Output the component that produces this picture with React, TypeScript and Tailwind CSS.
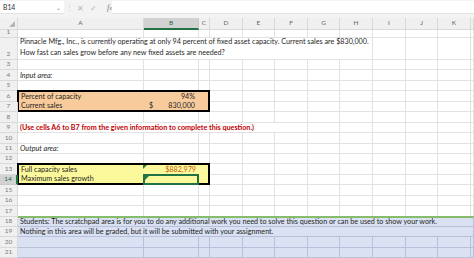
import type { ReactNode } from "react";

const HEADERS = ["A", "B", "C", "D", "E", "F", "G", "H", "I", "J", "K", ""];

const SPAN: Record<number, string> = {
  1: "col-span-1",
  2: "col-span-2",
  3: "col-span-3",
  4: "col-span-4",
  5: "col-span-5",
  6: "col-span-6",
  7: "col-span-7",
  8: "col-span-8",
  9: "col-span-9",
  10: "col-span-10",
  11: "col-span-11",
  12: "col-span-12",
};

const GRID = "border-r border-b border-[#e2e2e2]";
const BLUE = "bg-[#d9e1f2] border-r border-b border-[#b7c2da]";

function RowHead({ n, active }: { n: number | string; active?: boolean }) {
  return (
    <div
      className={`flex items-end justify-center pb-[1.5px] text-[6.5px] leading-none border-b border-r ${
        active
          ? "bg-[#d2d2d2] text-[#1e6b41] border-r-[#217346] border-r-2 border-b-[#c8c8c8]"
          : "bg-[#f0f0f0] text-[#7a7a7a] border-[#dadada]"
      }`}
    >
      {n}
    </div>
  );
}

function Empty({ count, cls = GRID }: { count: number; cls?: string }) {
  return (
    <>
      {Array.from({ length: count }).map((_, i) => (
        <div key={i} className={cls} />
      ))}
    </>
  );
}

function Text({
  span,
  children,
  cls = "",
}: {
  span: number;
  children?: ReactNode;
  cls?: string;
}) {
  return (
    <div
      className={`${SPAN[span]} ${GRID} flex items-end pl-[2px] pb-px text-[7.2px] leading-none whitespace-nowrap ${cls}`}
    >
      {children}
    </div>
  );
}

function Triangle() {
  return (
    <span className="absolute left-0 top-0 w-0 h-0 border-t-[4px] border-r-[4px] border-t-[#1f7a45] border-r-transparent" />
  );
}

export default function App() {
  return (
    <div className="w-[474px] h-[258px] overflow-hidden bg-white text-[#1f1f1f] [font-family:Lato,sans-serif]">
      {/* formula bar */}
      <div className="h-[18px] bg-[#f3f3f3] flex items-start pt-[1px]">
        <div className="w-[64px] h-[13px] bg-white border-b border-[#e4e4e4] flex items-center justify-between pl-[3px] pr-[3px] text-[6.8px] text-[#333]">
          <span>B14</span>
          <span className="text-[#888] text-[6px]">⌄</span>
        </div>
        <div className="w-[48px] h-[13px] flex items-center text-[#b5b5b5]">
          <span className="ml-[2px] text-[7px] text-[#c8c8c8]">⋮</span>
          <span className="ml-[4px] text-[8px]">✕</span>
          <span className="ml-[6px] text-[8px]">✓</span>
          <span className="ml-[10px] text-[8px] italic text-[#777] [font-family:'Liberation_Serif',serif]">
            f<span className="text-[6px]">x</span>
          </span>
        </div>
        <div className="flex-1 h-[13px] bg-white border-b border-[#e4e4e4]" />
      </div>

      <div className="grid grid-cols-[18px_126px_55px_11px_33px_32px_33px_32px_33px_33px_32px_33px_3px] grid-rows-[12px_8px_22px_repeat(19,10.45px)]">
        {/* column headers */}
        <div className="bg-[#f0f0f0] border-r border-b border-[#dadada] relative">
          <span className="absolute right-[2px] bottom-[2px] w-0 h-0 border-l-[6px] border-b-[6px] border-l-transparent border-b-[#b5b5b5]" />
        </div>
        {HEADERS.map((h, i) => (
          <div
            key={i}
            className={`flex items-center justify-center text-[6.5px] leading-none border-r ${
              h === "B"
                ? "bg-[#d2d2d2] text-[#1e6b41] border-b-2 border-b-[#217346] border-r-[#c8c8c8]"
                : "bg-[#f0f0f0] text-[#666] border-b border-[#dadada]"
            }`}
          >
            {h}
          </div>
        ))}

        {/* row 1 */}
        <RowHead n={1} />
        <Empty count={12} />

        {/* row 2 */}
        <RowHead n={2} />
        <div className={`${SPAN[8]} ${GRID} flex flex-col justify-end pl-[2px] pb-px text-[7.2px] leading-[11px] whitespace-nowrap`}>
          <span>
            Pinnacle Mfg., Inc., is currently operating at only 94 percent of fixed asset capacity. Current sales are $830,000.
          </span>
          <span>How fast can sales grow before any new fixed assets are needed?</span>
        </div>
        <Empty count={4} />

        {/* row 3 */}
        <RowHead n={3} />
        <Empty count={12} />

        {/* row 4 */}
        <RowHead n={4} />
        <Text span={1} cls="italic">
          Input area:
        </Text>
        <Empty count={11} />

        {/* row 5 */}
        <RowHead n={5} />
        <Empty count={12} />

        {/* rows 6-7 */}
        <RowHead n={6} />
        <div className="col-span-3 row-span-2 bg-[#f8cb9c] border-2 border-black -mt-px -ml-px flex flex-col text-[7.2px] leading-none">
          <div className="flex-1 flex items-end pb-px">
            <span className="w-[124px] pl-[2px]">Percent of capacity</span>
            <span className="w-[54px] text-right pr-[2px]">94%</span>
          </div>
          <div className="flex-1 flex items-end pb-px">
            <span className="w-[124px] pl-[2px]">Current sales</span>
            <span className="w-[54px] flex justify-between pl-[6px] pr-[2px]">
              <span>$</span>
              <span>830,000</span>
            </span>
          </div>
        </div>
        <Empty count={9} />
        <RowHead n={7} />
        <Empty count={9} />

        {/* row 8 */}
        <RowHead n={8} />
        <Empty count={12} />

        {/* row 9 */}
        <RowHead n={9} />
        <Text span={6} cls="font-bold text-[#c00000]">
          (Use cells A6 to B7 from the given information to complete this question.)
        </Text>
        <Empty count={6} />

        {/* row 10 */}
        <RowHead n={10} />
        <Empty count={12} />

        {/* row 11 */}
        <RowHead n={11} />
        <Text span={1} cls="italic">
          Output area:
        </Text>
        <Empty count={11} />

        {/* row 12 */}
        <RowHead n={12} />
        <Empty count={12} />

        {/* rows 13-14 */}
        <RowHead n={13} />
        <div className="col-span-3 row-span-2 bg-[#fcf99c] border-2 border-black -mt-px -ml-px flex flex-col text-[7.2px] leading-none">
          <div className="flex-1 flex items-end">
            <span className="w-[124px] pl-[2px] pb-px">Full capacity sales</span>
            <span className="relative w-[55px] h-full flex items-end justify-end pr-[2px] pb-px text-[#c55a11]">
              <Triangle />
              $882,979
            </span>
          </div>
          <div className="flex-1 flex items-end">
            <span className="w-[124px] pl-[2px] pb-px">Maximum sales growth</span>
            <span className="relative w-[56px] h-[calc(100%+2px)] -mb-[2px] border-2 border-[#217346]">
              <Triangle />
            </span>
          </div>
        </div>
        <Empty count={9} />
        <RowHead n={14} active />
        <Empty count={9} />

        {/* rows 15-17 */}
        <RowHead n={15} />
        <Empty count={12} />
        <RowHead n={16} />
        <Empty count={12} />
        <RowHead n={17} />
        <Empty count={12} />

        {/* scratchpad */}
        <RowHead n={18} />
        <div className={`${SPAN[12]} ${BLUE} border-t-2 border-t-[#86bd6a] -mt-px flex items-end pl-[2px] pb-px text-[7.2px] leading-none whitespace-nowrap`}>
          Students: The scratchpad area is for you to do any additional work you need to solve this question or can be used to show your work.
        </div>
        <RowHead n={19} />
        <div className={`${SPAN[12]} ${BLUE} flex items-end pl-[2px] pb-px text-[7.2px] leading-none whitespace-nowrap`}>
          Nothing in this area will be graded, but it will be submitted with your assignment.
        </div>
        <RowHead n={20} />
        <Empty count={12} cls={BLUE} />
        <RowHead n={21} />
        <Empty count={12} cls={BLUE} />
      </div>
    </div>
  );
}
